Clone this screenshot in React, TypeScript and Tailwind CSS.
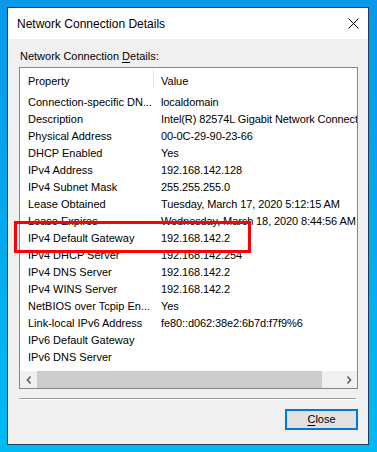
import React from 'react';

const rows: [string, string][] = [
  ['Connection-specific DN...', 'localdomain'],
  ['Description', 'Intel(R) 82574L Gigabit Network Connect'],
  ['Physical Address', '00-0C-29-90-23-66'],
  ['DHCP Enabled', 'Yes'],
  ['IPv4 Address', '192.168.142.128'],
  ['IPv4 Subnet Mask', '255.255.255.0'],
  ['Lease Obtained', 'Tuesday, March 17, 2020 5:12:15 AM'],
  ['Lease Expires', 'Wednesday, March 18, 2020 8:44:56 AM'],
  ['IPv4 Default Gateway', '192.168.142.2'],
  ['IPv4 DHCP Server', '192.168.142.254'],
  ['IPv4 DNS Server', '192.168.142.2'],
  ['IPv4 WINS Server', '192.168.142.2'],
  ['NetBIOS over Tcpip En...', 'Yes'],
  ['Link-local IPv6 Address', 'fe80::d062:38e2:6b7d:f7f9%6'],
  ['IPv6 Default Gateway', ''],
  ['IPv6 DNS Server', ''],
];

const Chevron: React.FC<{ dir: 'left' | 'right' }> = ({ dir }) => (
  <svg width="6" height="8" viewBox="0 0 6 8">
    <polyline
      points={dir === 'left' ? '4.5,0.5 1.5,4 4.5,7.5' : '1.5,0.5 4.5,4 1.5,7.5'}
      fill="none"
      stroke="#606060"
      strokeWidth="1.6"
    />
  </svg>
);

export default function App() {
  return (
    <div
      className="relative w-[377px] h-[452px] overflow-hidden bg-gradient-to-b from-[#0a98e8] to-[#00bbf3] pt-[7px] pl-[7px]"
      style={{ fontFamily: '"Liberation Sans", Arial, sans-serif' }}
    >
      <div className="flex h-[438px] w-[362px] flex-col border border-[#1f3b57] bg-[#f0f0f0]">
        {/* title bar */}
        <div className="flex h-[31px] items-center justify-between bg-white pl-[9px] pr-[9px]">
          <span className="text-[12px] text-black">Network Connection Details</span>
          <svg width="11" height="11" viewBox="0 0 11 11">
            <path d="M0.5 0.5 L10.5 10.5 M10.5 0.5 L0.5 10.5" stroke="#000" strokeWidth="1" />
          </svg>
        </div>

        {/* body */}
        <div className="flex flex-col pl-[11px] text-[11px] text-black">
          <div className="h-[28px] pl-[1px] pt-[11px] leading-[13px]">
            Network Connection <span className="underline underline-offset-[2px]">D</span>etails:
          </div>

          <div className="flex h-[322px] w-[339px] flex-col overflow-hidden border border-[#828790] bg-white">
            <div className="flex h-[26px] shrink-0 items-start">
              <div className="flex h-[26px] w-[133px] items-center pl-[8px]">Property</div>
              <div className="mt-[1px] h-[19px] w-px bg-[#e5e5e5]" />
              <div className="flex h-[26px] items-center pl-[7px]">Value</div>
            </div>
            <div className="flex flex-col">
              {rows.map(([k, v]) => (
                <div key={k} className="flex h-[17px] items-center whitespace-nowrap">
                  <div className="w-[134px] shrink-0 pl-[8px]">{k}</div>
                  <div className="shrink-0 pl-[7px] tracking-[-0.1px]">{v}</div>
                </div>
              ))}
            </div>
            <div className="flex-1" />
            {/* horizontal scrollbar */}
            <div className="flex h-[17px] shrink-0 bg-[#f0f0f0]">
              <div className="flex w-[17px] items-center justify-center">
                <Chevron dir="left" />
              </div>
              <div className="w-[285px] bg-[#cdcdcd]" />
              <div className="flex-1" />
              <div className="flex w-[17px] items-center justify-center">
                <Chevron dir="right" />
              </div>
            </div>
          </div>

          <div className="mt-[9px] w-[337px] border-t border-b border-t-[#a0a0a0] border-b-white" />

          <div className="mt-[9px] flex w-[339px] justify-end">
            <button className="flex h-[21px] w-[73px] items-center justify-center border-2 border-[#0078d7] bg-[#e1e1e1] text-[11px] text-black">
              <span>
                <span className="underline underline-offset-[2px]">C</span>lose
              </span>
            </button>
          </div>
        </div>
      </div>

      {/* red highlight annotation */}
      <div className="absolute left-[14px] top-[221px] h-[32px] w-[237px] border-[3px] border-[#ff0000]" />
    </div>
  );
}
